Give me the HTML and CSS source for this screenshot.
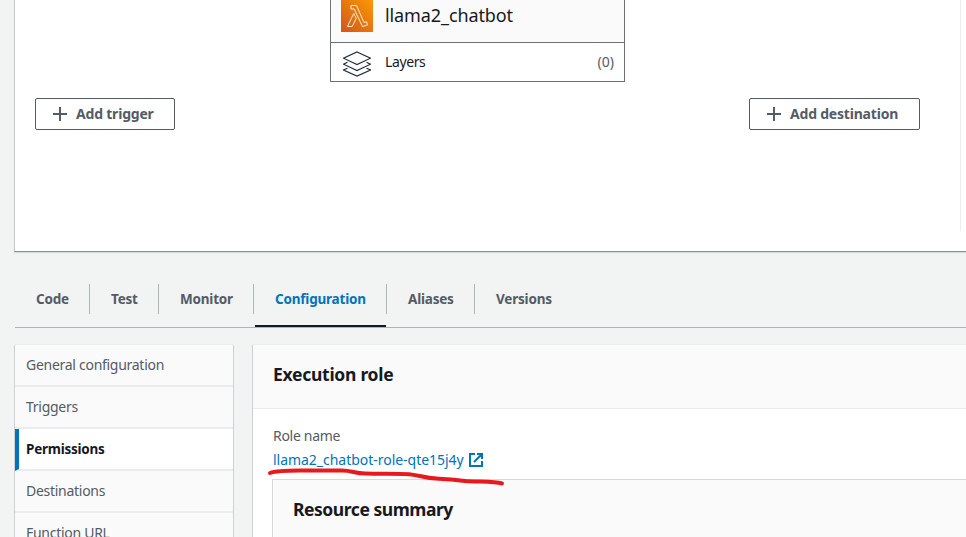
FILE: index.html
```html
<!DOCTYPE html>
<html lang="en">
<head>
<meta charset="utf-8">
<title>llama2_chatbot - Lambda</title>
<link rel="stylesheet" href="styles.css">
</head>
<body>
<section class="overview">
  <button class="btn trigger"><svg width="14" height="14"><path d="M7 0v14M0 7h14"/></svg><span>Add trigger</span></button>
  <div class="function">
    <div class="function-name">
      <svg width="32" height="32" viewBox="0 0 32 32"><defs><linearGradient id="g" x1="0" y1="1" x2="1" y2="0"><stop offset="0" stop-color="#cf571c"/><stop offset="1" stop-color="#fb9804"/></linearGradient></defs><path fill="url(#g)" d="M0 0h32v32H0z"/><path fill="none" stroke="#fff" stroke-opacity=".85" d="M10 5.500h5.500l7.500 17 2.500-.8 1 3.300-5 1.500L15 13 13.300 9H10zM12.700 13.500l2.500 4.800-4 8.200H6.500z"/></svg>
      <span>llama2_chatbot</span>
    </div>
    <div class="layers">
      <svg width="28" height="26" viewBox="0 0 28 26" fill="none" stroke="#232f3e" stroke-width="1.150"><path d="M14 1l13.500 6.200L14 13.500.500 7.200zM4.500 11.200L.500 13.200 14 19.500l13.500-6.300-4-2M4.500 17.200L.500 19 14 25l13.500-6-4-1.800"/></svg>
      <span class="layers-label">Layers</span><span class="count">(0)</span>
    </div>
  </div>
  <div class="right">
    <button class="btn destination"><svg width="14" height="14"><path d="M7 0v14M0 7h14"/></svg><span>Add destination</span></button>
  </div>
</section>
<nav class="tabs">
  <a class="tab code">Code</a>
  <a class="tab test">Test</a>
  <a class="tab monitor">Monitor</a>
  <a class="tab configuration">Configuration</a>
  <a class="tab aliases">Aliases</a>
  <a class="tab versions">Versions</a>
</nav>
<main class="content">
  <nav class="side">
    <a>General configuration</a>
    <a>Triggers</a>
    <a class="active">Permissions</a>
    <a>Destinations</a>
    <a>Function URL</a>
  </nav>
  <section class="role">
    <h2>Execution role</h2>
    <div class="role-body">
      <div class="label">Role name</div>
      <a class="link"><span>llama2_chatbot-role-qte15j4y</span><svg width="14" height="14" viewBox="0 0 14 14" fill="none" stroke="#0073bb" stroke-width="2"><path d="M6 1H1v12h12V8M8 1h5v5M13 1L5 9"/></svg></a>
      <svg class="underline" width="238" height="18" viewBox="0 0 238 18"><path d="M2 7C10 4 22 4.500 40 4.500h34C84 4.500 87 7.500 97 7.500c18 .5 30-.2 44 .7 10 .8 14 4 30 4.600 12 .5 18 1.200 27 2.200 12 1 28 0 36 2.500"/></svg>
      <div class="resource"><h3>Resource summary</h3></div>
    </div>
  </section>
</main>
</body>
</html>
```
FILE: styles.css
```css
* { box-sizing: border-box; }
body { margin: 0; width: 966px; height: 537px; overflow: hidden; background: #f2f3f3; color: #16191f; font: 14px/22px "Noto Sans", sans-serif; }
svg { display: block; flex: none; }
h2, h3 { margin: 0; font-size: 17.5px; line-height: 22px; }
h2 { letter-spacing: -.27px; }
h3 { letter-spacing: -.45px; }
.overview { display: flex; align-items: flex-start; margin-left: 14px; height: 252px; background: #fff; border-left: 1px solid #c5cbcd; border-bottom: 1px solid #879596; box-shadow: 0 1px 1px #d5dbdb; }
.btn { display: flex; align-items: center; gap: 9px; height: 32px; margin: 98px 0 0; padding: 0 0 0 17px; background: #fff; border: 1px solid #545b64; border-radius: 2px; color: #545b64; font: bold 14px "Noto Sans", sans-serif; letter-spacing: -.2px; white-space: nowrap; }
.btn span { margin-top: -1px; }
.btn path { stroke: #545b64; stroke-width: 2; }
.trigger { width: 140px; margin-left: 20px; }
.destination { width: 171px; }
.function { width: 295px; height: 82px; margin-left: 155px; border: 1px solid #687078; border-top: 0; }
.function-name { display: flex; height: 43px; padding-left: 10px; gap: 12px; background: #fafafa; border-bottom: 1px solid #687078; font-size: 18px; line-height: 31px; letter-spacing: -.1px; }
.layers { display: flex; align-items: center; height: 38px; padding: 0 10px 0 12px; }
.layers svg { margin-top: 4px; }
.layers-label { margin-left: 14px; letter-spacing: -.4px; }
.count { margin-left: auto; color: #545b64; }
.right { width: 212px; height: 231px; margin-left: 124px; border-right: 1px solid #eaeded; }
.tabs { display: flex; height: 44px; margin: 32px 0 0 15px; border-bottom: 1px solid #aab7b8; font-size: 13.5px; font-weight: bold; letter-spacing: -.2px; color: #545b64; }
.tab { height: 30px; padding-left: 21px; line-height: 30px; border-right: 1px solid #aab7b8; white-space: nowrap; }
.code { width: 75px; }
.test { width: 69px; }
.monitor { width: 95px; }
.configuration { width: 133px; color: #0073bb; }
.configuration::after { content: ""; display: block; width: 131px; height: 2px; margin: 11px 0 0 -20px; background: #16191f; }
.aliases { width: 88px; }
.versions { border: 0; }
.content { display: flex; gap: 18px; margin: 17px 0 0 14px; }
.side { width: 220px; height: 210px; border: solid #cbd1d3; border-width: 0 1px 0 1px; box-shadow: 0 -1px #eaeded; color: #545b64; letter-spacing: -.28px; }
.side a { display: block; height: 42px; padding-left: 11px; line-height: 40px; background: #fafafa; border-bottom: 2px solid #eaeded; }
.side .active { padding-left: 7px; border-left: 4px solid #0073bb; background: #fff; color: #16191f; font-size: 13.5px; font-weight: bold; letter-spacing: -.25px; }
.role { flex: 1; height: 200px; background: #fff; border-left: 1px solid #cbd1d3; box-shadow: 0 -1px #eaeded; }
.role h2 { height: 64px; padding: 18px 20px; background: #fafafa; border-bottom: 1px solid #eaeded; }
.role-body { position: relative; padding: 16px 0 0 20px; }
.label { color: #545b64; letter-spacing: -.3px; }
.link { display: flex; align-items: center; gap: 5px; height: 22px; margin-top: 2px; color: #0073bb; letter-spacing: -.03px; }
.underline { position: absolute; left: 15px; top: 57px; z-index: 1; overflow: visible; }
.underline path { fill: none; stroke: #e8191c; stroke-width: 4; stroke-linecap: round; stroke-linejoin: round; }
.resource { height: 80px; margin-top: 8px; margin-left: -1px; padding: 18px 20px; background: #fafafa; border: solid #d5dbdb; border-width: 1px 0 0 1px; }
```
